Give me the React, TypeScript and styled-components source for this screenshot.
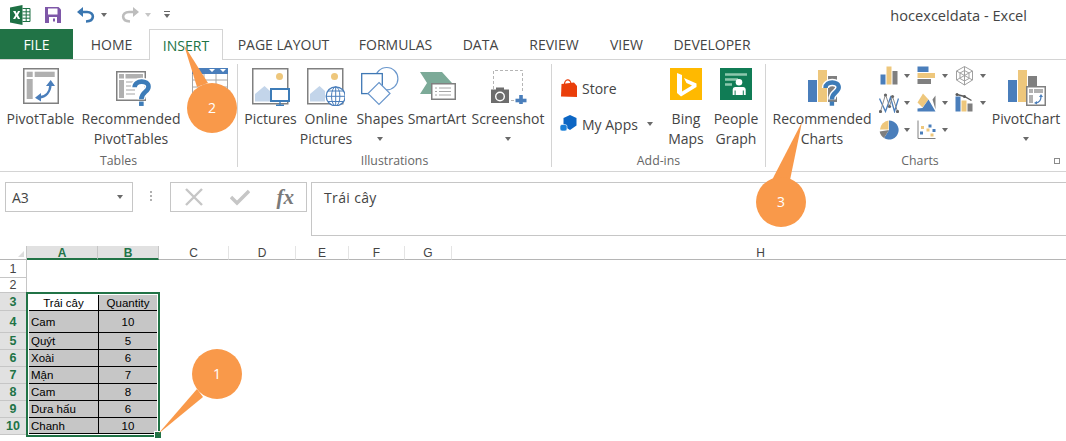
import styled, { createGlobalStyle } from "styled-components";
import type { ReactNode } from "react";

const BLUE = "#4a7ebb";
const TAN = "#eec77c";
const GRAY = "#7f7f7f";
const GREEN = "#217346";

const TABS = [
  { name: "HOME", width: 75 },
  { name: "INSERT", width: 74, active: true },
  { name: "PAGE LAYOUT", width: 121 },
  { name: "FORMULAS", width: 103 },
  { name: "DATA", width: 67 },
  { name: "REVIEW", width: 80 },
  { name: "VIEW", width: 65 },
  { name: "DEVELOPER", width: 106 },
];

const COLUMNS = [
  { name: "A", width: 71, selected: true },
  { name: "B", width: 61, selected: true },
  { name: "C", width: 70 },
  { name: "D", width: 67 },
  { name: "E", width: 53 },
  { name: "F", width: 56 },
  { name: "G", width: 47 },
  { name: "H", width: 618 },
];

const ROW_HEADS = [
  { n: 1, h: 18 },
  { n: 2, h: 15 },
  { n: 3, h: 18, selected: true },
  { n: 4, h: 22, selected: true },
  { n: 5, h: 17, selected: true },
  { n: 6, h: 17, selected: true },
  { n: 7, h: 17, selected: true },
  { n: 8, h: 17, selected: true },
  { n: 9, h: 17, selected: true },
  { n: 10, h: 17, selected: true },
];

const DATA: { fruit: string; qty: string; h: number }[] = [
  { fruit: "Cam", qty: "10", h: 22 },
  { fruit: "Quýt", qty: "5", h: 17 },
  { fruit: "Xoài", qty: "6", h: 17 },
  { fruit: "Mận", qty: "7", h: 17 },
  { fruit: "Cam", qty: "8", h: 17 },
  { fruit: "Dưa hấu", qty: "6", h: 17 },
  { fruit: "Chanh", qty: "10", h: 16 },
];

function Bars({ x = 0 }: { x?: number }) {
  return (
    <>
      <rect x={x} y="12" width="9" height="22" fill={BLUE} />
      <rect x={x + 10} y="2" width="9" height="32" fill={TAN} />
      <rect x={x + 20} y="8" width="9" height="26" fill={GRAY} />
    </>
  );
}

function Question({ x, y, s = 1 }: { x: number; y: number; s?: number }) {
  const d = "M2.4 7.5 C2.4 0.8 15 0.6 15 7 C15 12 8.5 11.5 8.5 18.5";
  return (
    <g transform={`translate(${x} ${y}) scale(${s})`}>
      <path d={d} fill="none" stroke="#fff" strokeWidth="7" />
      <path d={d} fill="none" stroke="#3d7cb8" strokeWidth="4.2" />
      <rect x="6.4" y="20.5" width="4.2" height="4" fill="#3d7cb8" />
    </g>
  );
}

function PictureFrame() {
  return (
    <>
      <rect x="0.75" y="0.75" width="35" height="35" fill="#fff" stroke="#808080" strokeWidth="1.5" />
      <circle cx="27.5" cy="8.5" r="3.5" fill={TAN} />
      <path d="M3 33.5 V26 L12.5 18 L18 23 V33.5 Z" fill="#c3d5ea" />
    </>
  );
}

function IconPivotTable() {
  return (
    <svg width="36" height="36" viewBox="0 0 36 36">
      <rect x="0.75" y="0.75" width="34.5" height="34.5" fill="#fff" stroke="#808080" strokeWidth="1.5" />
      <rect x="3.7" y="3.7" width="6" height="5.3" fill="#b0b0b0" />
      <rect x="11.7" y="3.7" width="20" height="5.3" fill="#b0b0b0" />
      <rect x="3.7" y="11" width="6" height="20" fill="#b0b0b0" />
      <path d="M16 29.5 C23 29 27 24 27.5 17" fill="none" stroke={BLUE} strokeWidth="2.4" />
      <path d="M23 18 L27.7 12 L32 18 Z M18 25 L12 29.8 L18 33.5 Z" fill={BLUE} />
    </svg>
  );
}

function IconRecommendedPivot() {
  return (
    <svg width="40" height="38" viewBox="0 0 40 38">
      <rect x="5.75" y="3.75" width="28.5" height="28.5" fill="#fff" stroke="#808080" strokeWidth="1.5" />
      <rect x="8" y="6" width="5" height="4.5" fill="#b0b0b0" />
      <rect x="14.5" y="6" width="17.5" height="4.5" fill="#b0b0b0" />
      <rect x="8" y="12" width="5" height="18" fill="#b0b0b0" />
      <path d="M15 14 H24 M15 18 H22 M15 22 H24 M15 26 H24" stroke="#c4c4c4" strokeWidth="1.4" />
      <Question x={21} y={11} s={1.1} />
    </svg>
  );
}

function IconTable() {
  return (
    <svg width="36" height="38" viewBox="0 0 36 38">
      <rect x="0.5" y="0.5" width="35" height="37" fill="#fff" stroke="#a6a6a6" />
      <rect width="36" height="6" fill={BLUE} />
      <path d="M17 1 L23 1 L20 4 Z M28 1 L34 1 L31 4 Z" fill="#fff" />
      <path d="M0 12 H36 M0 19 H36 M0 26 H36 M12 6 V38 M24 6 V38" stroke="#a6a6a6" />
    </svg>
  );
}

function IconPictures() {
  return (
    <svg width="38" height="38" viewBox="0 0 38 38">
      <PictureFrame />
      <rect x="18" y="20" width="20" height="14" fill="#fff" />
      <rect x="19" y="21" width="18" height="12" fill="#fff" stroke="#3d7cb8" strokeWidth="2" />
      <path d="M28 33 V37 M24 37.3 H32" stroke="#3d7cb8" strokeWidth="1.4" />
    </svg>
  );
}

function IconOnlinePictures() {
  return (
    <svg width="38" height="38" viewBox="0 0 38 38">
      <PictureFrame />
      <circle cx="28.7" cy="28.3" r="9.5" fill="#fff" stroke={BLUE} strokeWidth="1.3" />
      <ellipse cx="28.7" cy="28.3" rx="4.2" ry="9.5" fill="none" stroke={BLUE} />
      <path d="M19.2 28.3 H38.2 M21 23 H36.5 M21 33.5 H36.5 M28.7 19 V37.8" stroke={BLUE} />
    </svg>
  );
}

function IconShapes() {
  return (
    <ShapeSvg width="38" height="38" viewBox="0 0 38 38">
      <circle cx="25.7" cy="10.7" r="11.2" fill="#fff" stroke="#6a97cc" strokeWidth="1.2" />
      <rect x="0.7" y="5.6" width="20.6" height="20" fill="#fff" stroke="#3f78b5" strokeWidth="1.3" />
      <path d="M18 14.5 L29 25.5 L18 36.5 L7 25.5 Z" fill="#fff" stroke="#6a97cc" strokeWidth="1.2" />
    </ShapeSvg>
  );
}

function IconSmartArt() {
  return (
    <svg width="38" height="34" viewBox="0 0 38 34">
      <path d="M2 4 H24 L34 15 H13 V26 H2 L9 15 Z" fill="#7caa98" />
      <rect x="13.75" y="15.75" width="23.5" height="15.5" fill="#fff" stroke="#808080" strokeWidth="1.5" />
      <path d="M17 20 H19 M17 23.5 H19 M17 27 H19 M21 20 H33 M21 23.5 H33 M21 27 H33" stroke="#a6a6a6" />
    </svg>
  );
}

function IconScreenshot() {
  return (
    <svg width="38" height="36" viewBox="0 0 38 36">
      <path d="M4.5 21 V2.5 H33.5 V25 M22 32.5 H26" fill="none" stroke="#b5b5b5" strokeDasharray="3 2" />
      <rect x="2" y="21.5" width="18" height="13.5" fill="#6d6d6d" />
      <rect x="7" y="19.5" width="8" height="3" fill="#6d6d6d" />
      <circle cx="11" cy="28.5" r="4.3" fill="#6d6d6d" stroke="#fff" strokeWidth="1.4" />
      <rect x="26.5" y="30.7" width="11" height="3.6" fill={BLUE} />
      <rect x="30.2" y="27" width="3.6" height="11" fill={BLUE} />
    </svg>
  );
}

function IconStore() {
  return (
    <svg width="18" height="20" viewBox="0 0 18 20">
      <path d="M4.5 7 C4 0.5 11 0 11 6.5" fill="none" stroke="#ea3e0a" strokeWidth="1.2" />
      <path d="M1.5 6 L14 4.5 L17 8 V19 L1 18.5 Z" fill="#ea3e0a" />
    </svg>
  );
}

function IconMyApps() {
  return (
    <svg width="18" height="18" viewBox="0 0 18 18">
      <path d="M10 0 L16.5 3 V10.5 L10 15 L3.5 11 V3 Z" fill="#0c66c4" />
      <rect x="0" y="9.5" width="7" height="6.5" rx="2" fill="#1a7fd8" stroke="#fff" strokeWidth="0.6" />
    </svg>
  );
}

function IconBing() {
  return (
    <svg width="32" height="32" viewBox="0 0 32 32">
      <rect width="32" height="32" fill="#ffb900" />
      <path d="M7 5 L12 7 V23.5 L22 17.5 L16.5 15 L14 10 L26.5 15.5 V19 L11 28.5 L7 25 Z" fill="#fff" />
    </svg>
  );
}

function IconPeople() {
  return (
    <svg width="32" height="32" viewBox="0 0 32 32">
      <rect width="32" height="32" fill="#107c55" />
      <path d="M5 6.5 H27 M5 11.5 H18 M5 16.5 H12" stroke="#8cc7ad" strokeWidth="2.4" />
      <circle cx="19" cy="14.3" r="3.3" fill="#fff" />
      <path d="M12.7 27 V21.5 Q12.7 19 15 19 H23.4 Q25.7 19 25.7 21.5 V27 H23.8 V22.5 H22.8 V27 H15.6 V22.5 H14.6 V27 Z" fill="#fff" />
    </svg>
  );
}

function IconRecommendedCharts() {
  return (
    <svg width="44" height="38" viewBox="0 0 44 38">
      <Bars x={8} />
      <Question x={23} y={12} s={1.05} />
    </svg>
  );
}

function IconPivotChart() {
  return (
    <svg width="40" height="38" viewBox="0 0 40 38">
      <Bars x={2} />
      <rect x="20.75" y="18.75" width="18.5" height="18.5" fill="#fff" stroke="#808080" strokeWidth="1.5" />
      <rect x="23" y="21" width="4" height="4" fill="#b0b0b0" />
      <rect x="28" y="21" width="9" height="4" fill="#b0b0b0" />
      <rect x="23" y="27" width="4" height="8" fill="#b0b0b0" />
      <path d="M30 35 C33 34.5 35 32 35 28.5" fill="none" stroke={BLUE} strokeWidth="1.3" />
      <path d="M33 29 L35 26 L37 29 Z M31 33 L28 35 L31 36.5 Z" fill={BLUE} />
    </svg>
  );
}

const MINI_CHARTS: ReactNode[] = [
  <>
    <rect x="1" y="8" width="5" height="10" fill={BLUE} />
    <rect x="7" y="0" width="5" height="18" fill={TAN} />
    <rect x="13" y="4.5" width="5" height="13.5" fill={GRAY} />
  </>,
  <>
    <rect x="0" y="0" width="11" height="5.5" fill={BLUE} />
    <rect x="0" y="6.5" width="17.5" height="5" fill={TAN} />
    <rect x="0" y="12.5" width="13.5" height="5" fill={GRAY} />
  </>,
  <>
    <path d="M9 0 L17 4.5 V13.5 L9 18.5 L1 13.5 V4.5 Z M9 4 L13.5 6.5 V12 L9 14.5 L4.5 12 V6.5 Z M9 0 V18.5 M1 4.5 L17 13.5 M17 4.5 L1 13.5" fill="none" stroke="#a0a0a0" />
  </>,
  <>
    <path d="M0 5 L6 18 L11 4 L15 18 L19 5" fill="none" stroke={BLUE} strokeWidth="1.3" />
    <path d="M1 18 L6 1 L10 13 L13 3 L18 18" fill="none" stroke="#8c8c8c" strokeWidth="1" />
    <circle cx="1" cy="18" r="1.6" fill="#666" />
    <circle cx="6" cy="1.5" r="1.6" fill="#666" />
    <circle cx="10" cy="13" r="1.6" fill="#666" />
    <circle cx="13" cy="3" r="1.6" fill="#666" />
    <circle cx="18" cy="18" r="1.6" fill="#666" />
  </>,
  <>
    <path d="M15 6 L18 2 V16 Z" fill={GRAY} />
    <path d="M0 9 L5.5 0 L11 6 L5 14 Z" fill={TAN} />
    <path d="M0 18 V15 L5 14.5 L11 6 L18 18 Z" fill={BLUE} />
  </>,
  <>
    <rect x="0" y="3" width="5" height="15" fill={BLUE} />
    <rect x="6" y="7" width="5" height="11" fill={TAN} />
    <rect x="12" y="10" width="5" height="8" fill={GRAY} />
    <path d="M1.5 1 L9 3 L16 7" fill="none" stroke="#5a5a5a" strokeWidth="1.4" />
    <circle cx="1.5" cy="1" r="1.5" fill="#5a5a5a" />
    <circle cx="9" cy="3" r="1.5" fill="#5a5a5a" />
  </>,
  <>
    <path d="M9.5 0 A9.5 9.5 0 1 1 4.5 17.5 L9.5 9.5 Z" fill={BLUE} />
    <path d="M4.5 17.5 A9.5 9.5 0 0 1 0.2 11 L9.5 9.5 Z" fill={GRAY} />
    <path d="M0.5 9 A9.5 9.5 0 0 1 9 0 V9 Z" fill={TAN} />
  </>,
  <>
    <path d="M0.5 0 V18 H18" fill="none" stroke="#808080" />
    <path d="M2.5 11 h3 v3 h-3 Z M11 4 h3 v3 h-3 Z M15 8.5 h3 v3 h-3 Z" fill={BLUE} />
    <path d="M3.5 5.5 h3 v3 h-3 Z M9 8 h3 v3 h-3 Z M13 13 h3 v3 h-3 Z" fill={TAN} />
  </>,
];

function Tool({
  width,
  icon,
  lines,
  caret,
}: {
  width: number;
  icon: ReactNode;
  lines: string[];
  caret?: boolean;
}) {
  return (
    <ToolBox $width={width}>
      <ToolIcon>{icon}</ToolIcon>
      {lines.map((l) => (
        <ToolLine key={l}>{l}</ToolLine>
      ))}
      {caret && (
        <CaretLine>
          <Caret />
        </CaretLine>
      )}
    </ToolBox>
  );
}

function Callout({
  left,
  top,
  width,
  height,
  cx,
  cy,
  tail,
  label,
}: {
  left: number;
  top: number;
  width: number;
  height: number;
  cx: number;
  cy: number;
  tail: string;
  label: string;
}) {
  return (
    <CalloutBox $left={left} $top={top} $width={width} $height={height}>
      <svg width={width} height={height}>
        <polygon points={tail} fill="#f9994a" />
        <circle cx={cx} cy={cy} r="25" fill="#f9994a" />
      </svg>
      <CalloutLabel $x={cx} $y={cy}>
        {label}
      </CalloutLabel>
    </CalloutBox>
  );
}

export default function App() {
  return (
    <Page>
      <GlobalStyle />
      <TitleBar>
        <QuickAccess>
          <svg width="21" height="20" viewBox="0 0 21 20">
            <path d="M0 2.5 L12.5 0 V20 L0 17.5 Z" fill="#1e7145" />
            <path d="M3 6 H5.6 L6.7 8.5 L8 6 H10.2 L8 10 L10.2 14 H7.9 L6.6 11.5 L5.3 14 H3 L5.4 10 Z" fill="#fff" />
            <path d="M12.5 3.5 H20 V16.5 H12.5 M12.5 6.8 H20 M12.5 10 H20 M12.5 13.2 H20 M16.2 3.5 V16.5" fill="none" stroke="#1e7145" />
          </svg>
          <SaveSlot>
            <svg width="16" height="16" viewBox="0 0 16 16">
              <path d="M0 0 H13.5 L16 2.5 V16 H0 Z" fill="#7e57a8" />
              <rect x="3" y="1.5" width="9.5" height="6" fill="#fff" />
              <rect x="4" y="10" width="8" height="6" fill="#fff" />
              <rect x="8" y="11.5" width="2" height="3" fill="#7e57a8" />
            </svg>
          </SaveSlot>
          <UndoSlot>
            <svg width="18" height="16" viewBox="0 0 18 16">
              <path d="M4 5 H10 C18 5 18 14 9 14.5" fill="none" stroke="#3a76b0" strokeWidth="2.6" />
              <path d="M6 0 V10 L0 5 Z" fill="#3a76b0" />
            </svg>
            <TinyCaret />
          </UndoSlot>
          <RedoSlot>
            <svg width="18" height="16" viewBox="0 0 18 16">
              <path d="M14 5 H8 C0 5 0 14 9 14.5" fill="none" stroke="#bdbdbd" strokeWidth="2.6" />
              <path d="M12 0 V10 L18 5 Z" fill="#bdbdbd" />
            </svg>
            <TinyCaret $light />
          </RedoSlot>
          <CustomizeSlot>
            <CustomizeDash />
            <TinyCaret />
          </CustomizeSlot>
        </QuickAccess>
        <WindowTitle>hocexceldata - Excel</WindowTitle>
      </TitleBar>

      <TabBar>
        <FileTab>FILE</FileTab>
        {TABS.map((t) => (
          <Tab key={t.name} $width={t.width} $active={t.active}>
            {t.name}
          </Tab>
        ))}
      </TabBar>

      <Ribbon>
        <Group $width={238}>
          <Tools $inset={1}>
            <Tool width={79} icon={<IconPivotTable />} lines={["PivotTable"]} />
            <Tool width={102} icon={<IconRecommendedPivot />} lines={["Recommended", "PivotTables"]} />
            <Tool width={56} icon={<IconTable />} lines={[]} />
          </Tools>
          <GroupLabel>Tables</GroupLabel>
        </Group>
        <Group $width={314}>
          <Tools $inset={5}>
            <Tool width={55} icon={<IconPictures />} lines={["Pictures"]} />
            <Tool width={56} icon={<IconOnlinePictures />} lines={["Online", "Pictures"]} />
            <Tool width={52} icon={<IconShapes />} lines={["Shapes"]} caret />
            <Tool width={62} icon={<IconSmartArt />} lines={["SmartArt"]} />
            <Tool width={80} icon={<IconScreenshot />} lines={["Screenshot"]} caret />
          </Tools>
          <GroupLabel>Illustrations</GroupLabel>
        </Group>
        <Group $width={214}>
          <Tools $inset={8}>
            <AddinList>
              <AddinRow>
                <AddinIcon>
                  <IconStore />
                </AddinIcon>
                Store
              </AddinRow>
              <AddinRow>
                <AddinIcon>
                  <IconMyApps />
                </AddinIcon>
                My Apps
                <AddinCaret />
              </AddinRow>
            </AddinList>
            <Tool width={50} icon={<IconBing />} lines={["Bing", "Maps"]} />
            <Tool width={50} icon={<IconPeople />} lines={["People", "Graph"]} />
          </Tools>
          <GroupLabel>Add-ins</GroupLabel>
        </Group>
        <Group $width={308} $last>
          <Tools $inset={5}>
            <Tool width={102} icon={<IconRecommendedCharts />} lines={["Recommended", "Charts"]} />
            <MiniGrid>
              {MINI_CHARTS.map((m, i) => (
                <MiniChart key={i}>
                  <svg width="20" height="20" viewBox="-0.5 -0.5 20 20">
                    {m}
                  </svg>
                  <TinyCaret />
                </MiniChart>
              ))}
            </MiniGrid>
            <Tool width={72} icon={<IconPivotChart />} lines={["PivotChart"]} caret />
          </Tools>
          <GroupLabel>Charts</GroupLabel>
          <Launcher />
        </Group>
      </Ribbon>

      <FormulaBar>
        <NameBox>
          A3
          <TinyCaret />
        </NameBox>
        <Grip />
        <FormulaButtons>
          <svg width="18" height="18" viewBox="0 0 18 18">
            <path d="M1 1 L17 17 M17 1 L1 17" stroke="#c6c6c6" strokeWidth="2.4" />
          </svg>
          <svg width="20" height="18" viewBox="0 0 20 18">
            <path d="M1 9 L7 15 L19 3" fill="none" stroke="#c6c6c6" strokeWidth="3.4" />
          </svg>
          <FxLabel>fx</FxLabel>
        </FormulaButtons>
        <FormulaInput>Trái cây</FormulaInput>
      </FormulaBar>

      <Sheet>
        <HeaderRow>
          <Corner>
            <CornerMark />
          </Corner>
          {COLUMNS.map((c) => (
            <ColumnHead key={c.name} $width={c.width} $selected={c.selected}>
              {c.name}
            </ColumnHead>
          ))}
        </HeaderRow>
        <SheetBody>
          <RowHeads>
            {ROW_HEADS.map((r) => (
              <RowHead key={r.n} $height={r.h} $selected={r.selected}>
                {r.n}
              </RowHead>
            ))}
          </RowHeads>
          <CellArea>
            <Selection>
              <DataRow $height={16}>
                <Cell $white $center>
                  Trái cây
                </Cell>
                <Cell $center>Quantity</Cell>
              </DataRow>
              {DATA.map((d) => (
                <DataRow key={d.fruit + d.qty} $height={d.h}>
                  <Cell>{d.fruit}</Cell>
                  <Cell $center>{d.qty}</Cell>
                </DataRow>
              ))}
              <FillHandle />
            </Selection>
          </CellArea>
        </SheetBody>
      </Sheet>

      <Callout left={150} top={340} width={100} height={100} cx={67} cy={34} tail="8,94 47,49 53,57" label="1" />
      <Callout left={175} top={40} width={70} height={100} cx={37} cy={68} tail="9,5 22,47 33,43" label="2" />
      <Callout left={750} top={118} width={70} height={115} cx={31} cy={84} tail="52,4 22,62 40,62" label="3" />
    </Page>
  );
}

const GlobalStyle = createGlobalStyle`
  html, body {
    margin: 0;
    padding: 0;
    background: #fff;
    overflow: hidden;
  }
`;

const Page = styled.div`
  position: relative;
  width: 1066px;
  height: 441px;
  overflow: hidden;
  background: #fff;
  color: #444;
  font-family: "Open Sans", "Noto Sans", sans-serif;
  font-size: 14px;
`;

const TitleBar = styled.div`
  display: flex;
  justify-content: space-between;
  align-items: center;
  height: 29px;
  padding: 0 39px 0 10px;
`;

const QuickAccess = styled.div`
  display: flex;
  align-items: center;
`;

const SaveSlot = styled.div`
  display: flex;
  margin-left: 14px;
`;

const UndoSlot = styled.div`
  display: flex;
  align-items: center;
  gap: 6px;
  margin-left: 16px;
`;

const RedoSlot = styled(UndoSlot)`
  margin-left: 14px;
`;

const CustomizeSlot = styled.div`
  display: flex;
  flex-direction: column;
  align-items: center;
  gap: 2px;
  margin-left: 13px;
`;

const CustomizeDash = styled.div`
  width: 6px;
  height: 1px;
  background: #666;
`;

const TinyCaret = styled.span<{ $light?: boolean }>`
  width: 0;
  height: 0;
  border-left: 3.5px solid transparent;
  border-right: 3.5px solid transparent;
  border-top: 4px solid ${(p) => (p.$light ? "#c6c6c6" : "#6a6a6a")};
`;

const WindowTitle = styled.div`
  font-size: 14.6px;
  color: #444;
`;

const TabBar = styled.div`
  display: flex;
  height: 31px;
  border-bottom: 1px solid #d4d4d4;
  box-sizing: border-box;
`;

const FileTab = styled.div`
  display: flex;
  align-items: center;
  justify-content: center;
  width: 73px;
  margin-right: 1px;
  background: ${GREEN};
  color: #fff;
  font-size: 14px;
`;

const Tab = styled.div<{ $width: number; $active?: boolean }>`
  display: flex;
  align-items: center;
  justify-content: center;
  box-sizing: border-box;
  width: ${(p) => p.$width}px;
  height: ${(p) => (p.$active ? "31px" : "30px")};
  font-size: 14px;
  color: ${(p) => (p.$active ? GREEN : "#444")};
  background: #fff;
  border: 1px solid ${(p) => (p.$active ? "#d4d4d4" : "transparent")};
  border-bottom: none;
`;

const Ribbon = styled.div`
  display: flex;
  box-sizing: border-box;
  height: 112px;
  padding: 4px 0;
  border-bottom: 1px solid #d4d4d4;
`;

const Group = styled.div<{ $width: number; $last?: boolean }>`
  position: relative;
  display: flex;
  flex: none;
  flex-direction: column;
  box-sizing: border-box;
  width: ${(p) => p.$width}px;
  border-right: ${(p) => (p.$last ? "none" : "1px solid #d4d4d4")};
`;

const Tools = styled.div<{ $inset: number }>`
  display: flex;
  flex: 1;
  padding-left: ${(p) => p.$inset}px;
`;

const GroupLabel = styled.div`
  height: 14px;
  line-height: 16px;
  text-align: center;
  font-size: 12.3px;
  color: #666;
`;

const ToolBox = styled.div<{ $width: number }>`
  display: flex;
  flex-direction: column;
  align-items: center;
  flex: none;
  width: ${(p) => p.$width}px;
  white-space: nowrap;
`;

const ToolIcon = styled.div`
  display: flex;
  justify-content: center;
  align-items: flex-start;
  height: 45px;
  padding-top: 4px;
  box-sizing: border-box;
`;

const ShapeSvg = styled.svg`
  overflow: visible;
`;

const ToolLine = styled.div`
  height: 20px;
  line-height: 20px;
  font-size: 14px;
  color: #444;
`;

const CaretLine = styled.div`
  display: flex;
  align-items: center;
  justify-content: center;
  height: 20px;
`;

const Caret = styled.span`
  width: 0;
  height: 0;
  border-left: 3.5px solid transparent;
  border-right: 3.5px solid transparent;
  border-top: 4px solid #6a6a6a;
`;

const AddinList = styled.div`
  display: flex;
  flex-direction: column;
  gap: 16px;
  flex: none;
  width: 101px;
  padding-top: 14px;
`;

const AddinRow = styled.div`
  display: flex;
  align-items: center;
  height: 20px;
  font-size: 14px;
`;

const AddinIcon = styled.span`
  display: flex;
  width: 22px;
`;

const AddinCaret = styled(TinyCaret)`
  margin-left: 9px;
`;

const MiniGrid = styled.div`
  display: grid;
  grid-template-columns: repeat(3, 38px);
  grid-auto-rows: 27px;
  flex: none;
  width: 111px;
  padding-top: 2px;
  margin-left: 6px;
`;

const MiniChart = styled.div`
  display: flex;
  align-items: center;
  gap: 5px;
  height: 20px;
`;

const Launcher = styled.div`
  position: absolute;
  right: 14px;
  bottom: 3px;
  width: 6px;
  height: 6px;
  border: 1px solid #8a8a8a;
  box-sizing: border-box;
`;

const FormulaBar = styled.div`
  display: flex;
  align-items: flex-start;
  padding: 10px 0 0 5px;
  height: 74px;
  box-sizing: border-box;
`;

const NameBox = styled.div`
  display: flex;
  align-items: center;
  justify-content: space-between;
  box-sizing: border-box;
  width: 128px;
  height: 30px;
  padding: 0 9px 0 6px;
  border: 1px solid #c6c6c6;
  font-size: 14px;
`;

const Grip = styled.div`
  width: 2px;
  height: 2px;
  margin: 9px 18px 0 17px;
  background: #b0b0b0;
  box-shadow: 0 4px 0 #b0b0b0, 0 8px 0 #b0b0b0;
`;

const FormulaButtons = styled.div`
  display: flex;
  align-items: center;
  justify-content: space-between;
  box-sizing: border-box;
  width: 137px;
  height: 30px;
  padding: 0 12px 0 14px;
  border: 1px solid #c6c6c6;
`;

const FxLabel = styled.span`
  font-family: "Liberation Serif", serif;
  font-style: italic;
  font-weight: bold;
  font-size: 21px;
  color: #7a7a7a;
`;

const FormulaInput = styled.div`
  box-sizing: border-box;
  flex: 1;
  height: 54px;
  margin-left: 4px;
  padding: 5px 12px;
  border: 1px solid #c6c6c6;
  border-right: none;
  font-size: 14px;
  letter-spacing: 0.35px;
`;

const Sheet = styled.div`
  display: flex;
  flex-direction: column;
`;

const HeaderRow = styled.div`
  display: flex;
  height: 14px;
`;

const Corner = styled.div`
  position: relative;
  flex: none;
  box-sizing: border-box;
  width: 27px;
  border-right: 1px solid #c6c6c6;
  border-bottom: 1px solid #b5b5b5;
`;

const CornerMark = styled.div`
  position: absolute;
  right: 2px;
  bottom: 2px;
  width: 0;
  height: 0;
  border-left: 6px solid transparent;
  border-bottom: 6px solid #dcdcdc;
`;

const ColumnHead = styled.div<{ $width: number; $selected?: boolean }>`
  flex: none;
  box-sizing: border-box;
  width: ${(p) => p.$width}px;
  text-align: center;
  line-height: 14px;
  font-family: "Liberation Sans", sans-serif;
  font-size: 12px;
  font-weight: ${(p) => (p.$selected ? "bold" : "normal")};
  color: ${(p) => (p.$selected ? GREEN : "#444")};
  background: ${(p) => (p.$selected ? "#e1e1e1" : "#fff")};
  border-right: 1px solid ${(p) => (p.$selected ? "#c6c6c6" : "#e4e4e4")};
  border-bottom: ${(p) => (p.$selected ? `2px solid ${GREEN}` : "1px solid #b5b5b5")};
`;

const SheetBody = styled.div`
  display: flex;
`;

const RowHeads = styled.div`
  display: flex;
  flex-direction: column;
  width: 27px;
`;

const RowHead = styled.div<{ $height: number; $selected?: boolean }>`
  display: flex;
  align-items: center;
  justify-content: center;
  box-sizing: border-box;
  height: ${(p) => p.$height}px;
  font-family: "Liberation Sans", sans-serif;
  font-size: 12.5px;
  font-weight: ${(p) => (p.$selected ? "bold" : "normal")};
  color: ${(p) => (p.$selected ? GREEN : "#444")};
  background: ${(p) => (p.$selected ? "#e1e1e1" : "#fff")};
  border-right: 1px solid #c6c6c6;
  border-bottom: 1px solid #c6c6c6;
`;

const CellArea = styled.div`
  padding-top: 32px;
  margin-left: -1px;
`;

const Selection = styled.div`
  position: relative;
  box-sizing: border-box;
  width: 134px;
  padding: 1px;
  border: 2px solid ${GREEN};
  background: #fff;
`;

const DataRow = styled.div<{ $height: number }>`
  display: grid;
  grid-template-columns: 70px 58px;
  height: ${(p) => p.$height}px;
  box-sizing: border-box;
  border-bottom: 1px solid #000;
  &:last-of-type {
    border-bottom: none;
  }
`;

const Cell = styled.div<{ $white?: boolean; $center?: boolean }>`
  display: flex;
  align-items: center;
  justify-content: ${(p) => (p.$center ? "center" : "flex-start")};
  padding-left: ${(p) => (p.$center ? "0" : "2px")};
  background: ${(p) => (p.$white ? "#fff" : "#c6c6c6")};
  border-right: 1px solid #000;
  font-family: "Liberation Sans", sans-serif;
  font-size: 11.5px;
  color: #000;
  &:last-child {
    border-right: none;
  }
`;

const FillHandle = styled.div`
  position: absolute;
  right: -4px;
  bottom: -4px;
  width: 6px;
  height: 6px;
  background: ${GREEN};
  border: 1px solid #fff;
`;

const CalloutBox = styled.div<{ $left: number; $top: number; $width: number; $height: number }>`
  position: absolute;
  left: ${(p) => p.$left}px;
  top: ${(p) => p.$top}px;
  width: ${(p) => p.$width}px;
  height: ${(p) => p.$height}px;
`;

const CalloutLabel = styled.div<{ $x: number; $y: number }>`
  position: absolute;
  left: ${(p) => p.$x - 15}px;
  top: ${(p) => p.$y - 10}px;
  width: 30px;
  line-height: 20px;
  text-align: center;
  color: #fff;
  font-size: 14px;
`;
